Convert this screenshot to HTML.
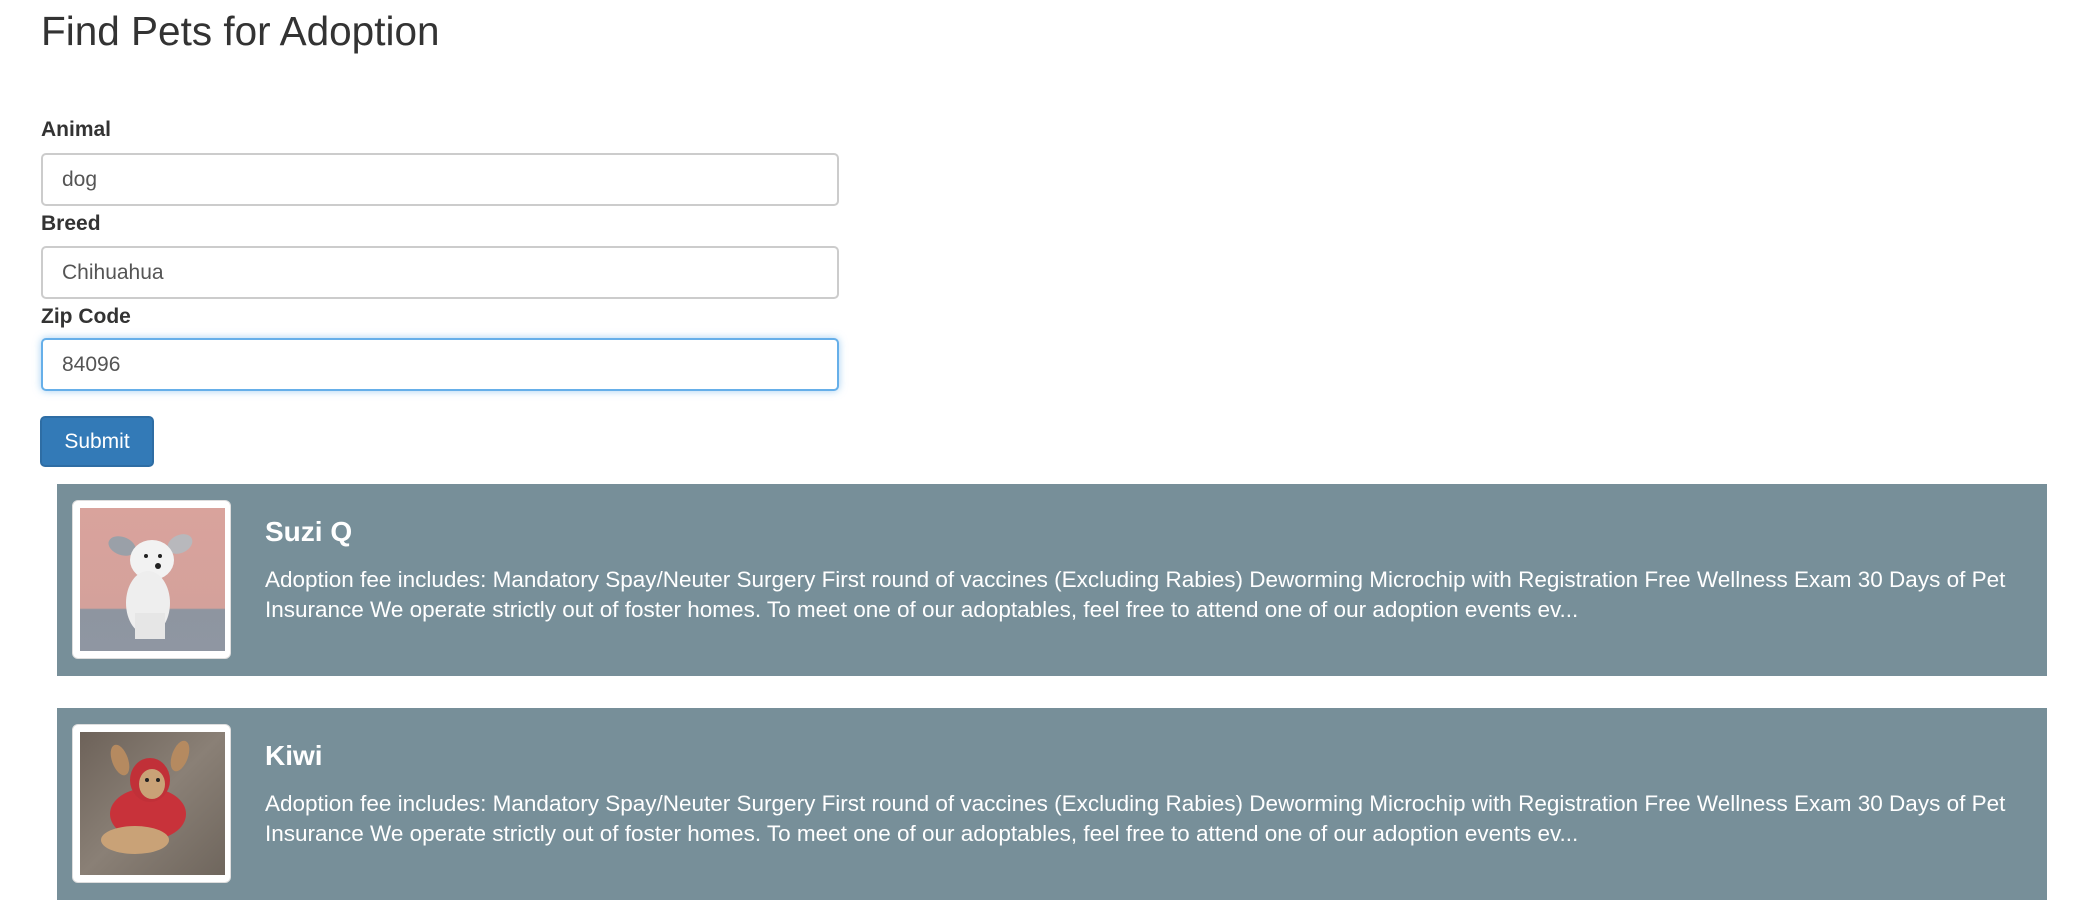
<!DOCTYPE html>
<html><head><meta charset="utf-8"><style>
*{box-sizing:border-box}
body{margin:0;width:2086px;height:922px;background:#fff;font-family:"Liberation Sans",Arial,sans-serif;color:#333;position:relative;overflow:hidden}
h1{position:absolute;left:41px;top:8px;margin:0;font-size:40.5px;font-weight:500;line-height:46px;color:#333}
.lbl{position:absolute;left:41px;font-size:21px;font-weight:bold;line-height:24px}
.inp{position:absolute;left:41px;width:798px;height:53px;border:2px solid #ccc;border-radius:5px;padding-left:19px;font-size:21px;line-height:49px;color:#555;background:#fff}
.inp.f{border-color:#66afe9;box-shadow:0 0 8px rgba(102,175,233,.6)}
.btn{position:absolute;left:40px;top:416px;width:114px;height:51px;background:#337ab7;border:2px solid #2e6da4;border-radius:5px;color:#fff;font-size:21px;line-height:47px;text-align:center}
.card{position:absolute;left:57px;width:1990px;height:192px;background:#778f99;color:#fff}
.th{position:absolute;left:15px;top:16px;width:159px;height:159px;background:#fff;border-radius:6px;border:1px solid #ddd;overflow:hidden}
.img{position:absolute;left:7px;top:7px;width:145px;height:143px}
.nm{position:absolute;left:208px;top:31px;font-size:28px;font-weight:bold;line-height:34px}
.ds{position:absolute;left:208px;top:81px;font-size:22.5px;line-height:29.5px;white-space:nowrap}
</style></head><body>
<h1>Find Pets for Adoption</h1>
<div class="lbl" style="top:118px">Animal</div>
<div class="inp" style="top:153px">dog</div>
<div class="lbl" style="top:212px">Breed</div>
<div class="inp" style="top:246px">Chihuahua</div>
<div class="lbl" style="top:305px">Zip Code</div>
<div class="inp f" style="top:338px">84096</div>
<div class="btn">Submit</div>

<div class="card" style="top:484px">
 <div class="th"><div class="img" style="background:linear-gradient(#d9a39c 0%,#d4a19b 70%,#8e95a0 71%,#8f96a2 100%)">
  <svg width="145" height="143" viewBox="0 0 145 143"><ellipse cx="42" cy="38" rx="14" ry="9" fill="#9aa0a8" transform="rotate(20 42 38)"/><ellipse cx="100" cy="36" rx="13" ry="9" fill="#b8b8bc" transform="rotate(-25 100 36)"/><ellipse cx="72" cy="52" rx="22" ry="20" fill="#f2f2f2"/><ellipse cx="68" cy="95" rx="22" ry="32" fill="#eeeeee"/><rect x="55" y="105" width="30" height="26" fill="#e6e6e6"/><circle cx="78" cy="58" r="3" fill="#222"/><circle cx="66" cy="48" r="2" fill="#222"/><circle cx="80" cy="48" r="2" fill="#222"/></svg>
 </div></div>
 <div class="nm">Suzi Q</div>
 <div class="ds">Adoption fee includes: Mandatory Spay/Neuter Surgery First round of vaccines (Excluding Rabies) Deworming Microchip with Registration Free Wellness Exam 30 Days of Pet<br>Insurance We operate strictly out of foster homes. To meet one of our adoptables, feel free to attend one of our adoption events ev...</div>
</div>

<div class="card" style="top:708px">
 <div class="th"><div class="img" style="background:linear-gradient(135deg,#6d6259,#8a8076 50%,#6f665d)">
  <svg width="145" height="143" viewBox="0 0 145 143"><ellipse cx="40" cy="28" rx="8" ry="16" fill="#b58a60" transform="rotate(-20 40 28)"/><ellipse cx="100" cy="24" rx="8" ry="16" fill="#b58a60" transform="rotate(20 100 24)"/><ellipse cx="68" cy="82" rx="38" ry="26" fill="#c8323a"/><ellipse cx="70" cy="48" rx="20" ry="22" fill="#c13038"/><ellipse cx="72" cy="52" rx="13" ry="15" fill="#c9a277"/><ellipse cx="55" cy="108" rx="34" ry="14" fill="#c9a277"/><circle cx="67" cy="48" r="2" fill="#222"/><circle cx="78" cy="48" r="2" fill="#222"/></svg>
 </div></div>
 <div class="nm">Kiwi</div>
 <div class="ds">Adoption fee includes: Mandatory Spay/Neuter Surgery First round of vaccines (Excluding Rabies) Deworming Microchip with Registration Free Wellness Exam 30 Days of Pet<br>Insurance We operate strictly out of foster homes. To meet one of our adoptables, feel free to attend one of our adoption events ev...</div>
</div>
</body></html>
